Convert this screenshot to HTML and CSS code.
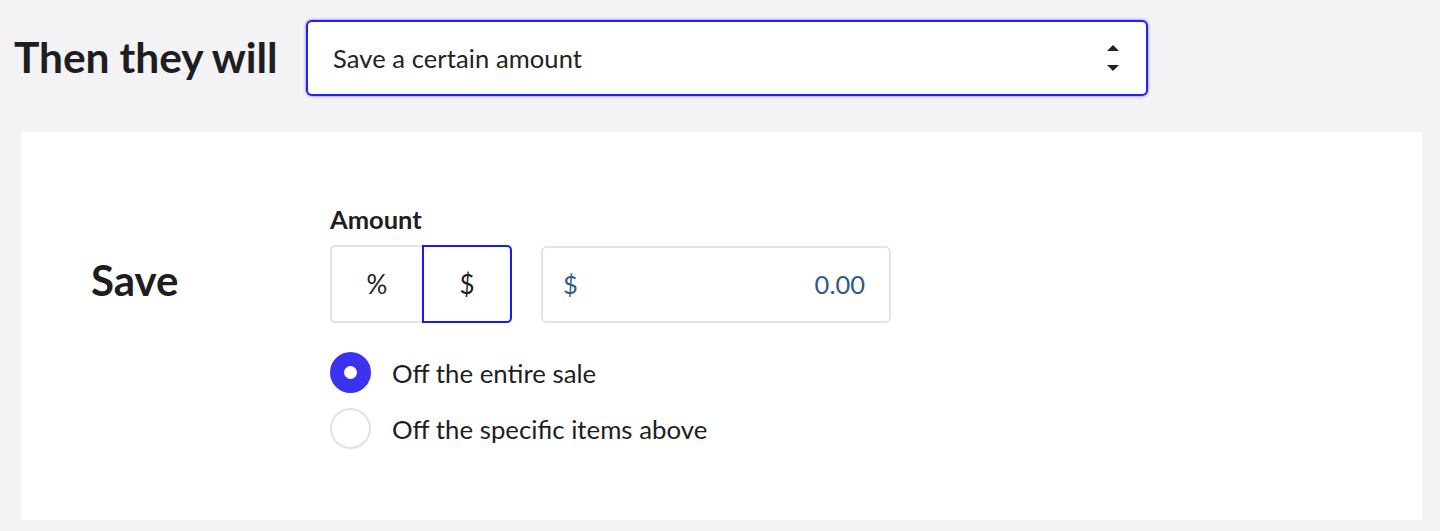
FILE: index.html
```html
<!DOCTYPE html>
<html>
<head>
<meta charset="utf-8">
<link rel="stylesheet" href="styles.css">
</head>
<body>
<div class="top">
  <h1 class="top-title">Then they will</h1>
  <div class="select">
    <span class="select-value">Save a certain amount</span>
    <svg class="select-arrows" width="14" height="34" viewBox="0 0 14 34">
      <path d="M1 10 L7 4 L13 10 Z" fill="#222"/>
      <path d="M1 24 L7 30 L13 24 Z" fill="#222"/>
    </svg>
  </div>
</div>
<div class="panel">
  <div class="panel-label">Save</div>
  <div class="controls">
    <div class="field-label">Amount</div>
    <div class="amount-row">
      <div class="segmented">
        <div class="seg">%</div>
        <div class="seg seg-active">$</div>
      </div>
      <div class="amount-input">
        <span class="currency">$</span>
        <span class="value">0.00</span>
      </div>
    </div>
    <div class="radios">
      <div class="radio-row">
        <span class="radio radio-on"></span>
        <span class="radio-text">Off the entire sale</span>
      </div>
      <div class="radio-row">
        <span class="radio"></span>
        <span class="radio-text">Off the specific items above</span>
      </div>
    </div>
  </div>
</div>
</body>
</html>
```
FILE: styles.css
```css
* { box-sizing: border-box; }
html, body { margin: 0; padding: 0; }
body {
  background: #f3f2f5;
  font-family: Lato, "Open Sans", sans-serif;
  color: #1e1e22;
  height: 531px;
  overflow: hidden;
}
.top {
  display: flex;
  align-items: flex-start;
  padding: 20px 0 0 14px;
  height: 132px;
}
.top-title {
  margin: 16px 0 0 0;
  font-size: 42.5px;
  font-weight: 700;
  line-height: 1;
  letter-spacing: -0.1px;
  width: 292px;
  flex-shrink: 0;
}
.select {
  width: 842px;
  height: 76px;
  background: #fff;
  border: 2px solid #2121f5;
  border-radius: 6px;
  box-shadow: 0 0 3px rgba(40, 40, 255, 0.7);
  display: flex;
  align-items: center;
  justify-content: space-between;
  padding: 0 26px 0 25px;
}
.select-value {
  font-size: 25.5px;
  line-height: 1.2;
  color: #222;
  letter-spacing: 0.1px;
}
.select-arrows { display: block; }
.panel {
  background: #fff;
  margin: 0 18px 0 21px;
  height: 388px;
  display: flex;
  padding: 0 0 0 70px;
}
.panel-label {
  font-size: 42px;
  font-weight: 700;
  width: 239px;
  padding-top: 127px;
  line-height: 1;
  flex-shrink: 0;
}
.controls {
  padding-top: 72px;
}
.field-label {
  font-size: 25.5px;
  font-weight: 700;
  line-height: 30px;
  margin-bottom: 11px;
}
.amount-row {
  display: flex;
  align-items: center;
  gap: 29px;
}
.segmented {
  display: flex;
}
.seg {
  width: 92px;
  height: 78px;
  display: flex;
  align-items: center;
  justify-content: center;
  font-size: 26px;
  border: 2px solid #e3e3e6;
  border-radius: 5px 0 0 5px;
  border-right: none;
}
.seg-active {
  width: 90px;
  border: 2px solid #1a1af5;
  border-radius: 0 5px 5px 0;
}
.amount-input {
  width: 350px;
  height: 77px;
  border: 2px solid #e3e3e6;
  border-radius: 6px;
  display: flex;
  align-items: center;
  justify-content: space-between;
  padding: 0 24px 0 20px;
  color: #2e5b8c;
  font-size: 25.5px;
}
.radios {
  margin-top: 29px;
  display: flex;
  flex-direction: column;
  gap: 15px;
}
.radio-row {
  display: flex;
  align-items: center;
  gap: 21px;
}
.radio {
  width: 41px;
  height: 41px;
  border-radius: 50%;
  border: 2px solid #e3e3e6;
  background: #fff;
  display: flex;
  align-items: center;
  justify-content: center;
  flex-shrink: 0;
}
.radio-on {
  background: #3b33f0;
  border-color: #3b33f0;
}
.radio-on::after {
  content: "";
  width: 13px;
  height: 13px;
  border-radius: 50%;
  background: #fff;
}
.radio-text {
  font-size: 25.8px;
}
```
